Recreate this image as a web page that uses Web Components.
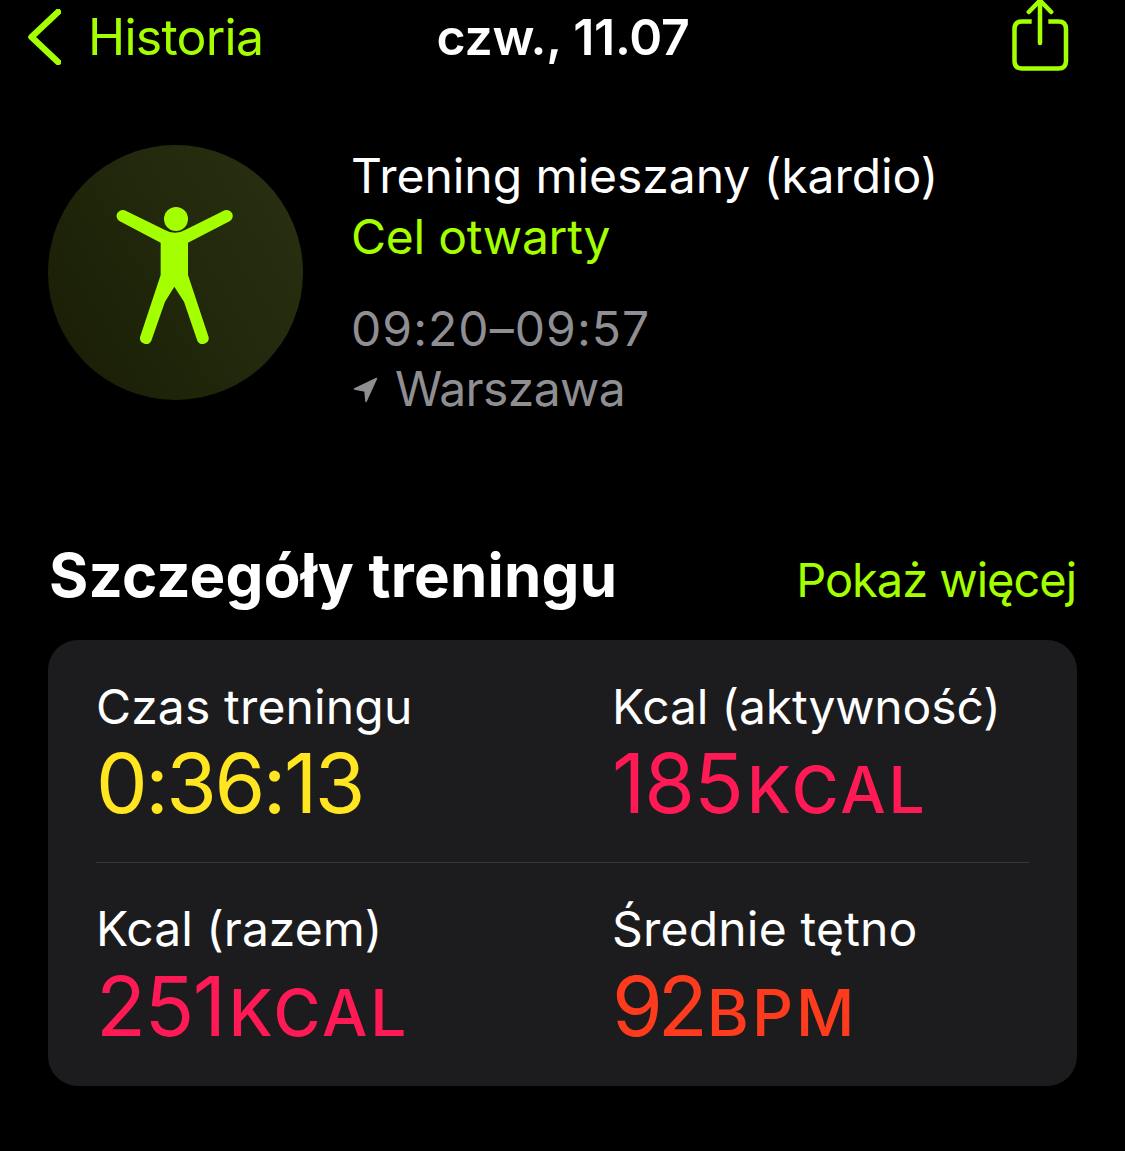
<!DOCTYPE html>
<html lang="pl">
<head>
<meta charset="utf-8">
<title>Trening</title>
<style>
    html, body { margin: 0; background: #000; }
    body { font-family: Inter, "Noto Sans", sans-serif; color: #fff; width: 1125px; height: 1151px; overflow: hidden; }
</style>
</head>
<body>
<workout-nav title-text="czw., 11.07" back="Historia"></workout-nav>
<workout-summary></workout-summary>
<section-head heading="Szczegóły treningu" action="Pokaż więcej"></section-head>
<stats-card>
    <stat-cell label="Czas treningu" label-tracking="0.15" value="0:36:13" color="#ffe620"></stat-cell>
    <stat-cell label="Kcal (aktywność)" label-tracking="-0.15" value="185" unit="KCAL" color="#ff1a55" tracking="-1"></stat-cell>
    <stat-cell label="Kcal (razem)" label-tracking="0" value="251" unit="KCAL" color="#ff1a55" tracking="-1.5"></stat-cell>
    <stat-cell label="Średnie tętno" label-tracking="0.2" value="92" unit="BPM" color="#ff3b1e" tracking="-5"></stat-cell>
</stats-card>

<script>
class WorkoutNav extends HTMLElement {
    constructor() {
        super();
        this.attachShadow({ mode: 'open' });
    }
    connectedCallback() {
        this.shadowRoot.innerHTML = `
            <style>
            :host { display: grid; grid-template-columns: 1fr auto 1fr; align-items: center; height: 72px; padding: 0 27px 0 28px; }
            .back { display: flex; align-items: center; gap: 27px; color: #a4ff00; font-size: 50px; letter-spacing: -0.75px; }
            .back span, .title { margin-top: 2px; }
            .back svg { margin-top: 2px; }
            .title { font-size: 50px; font-weight: 600; letter-spacing: -0.25px; }
            svg { display: block; }
            .share { justify-self: end; margin-right: 29px; }
            </style>
            <div class="back">
                <svg width="33" height="56" viewBox="0 0 33 56"><path d="M30 3 L3.500 28 L30 53" fill="none" stroke="#a4ff00" stroke-width="6.500" stroke-linecap="round" stroke-linejoin="round"/></svg>
                <span>${this.getAttribute('back')}</span>
            </div>
            <div class="title">${this.getAttribute('title-text')}</div>
            <svg class="share" width="58" height="72" viewBox="0 0 58 72"><g fill="none" stroke="#a4ff00" stroke-width="4.5" stroke-linecap="round" stroke-linejoin="round"><path d="M20.700 21.500 H11 Q3.500 21.500 3.500 29 V61 Q3.500 68.500 11 68.500 H47.500 Q55 68.500 55 61 V29 Q55 21.500 47.500 21.500 H37.300" stroke-linecap="butt"/><path d="M29 43 V1"/><path d="M17.800 12 L29 0.500 L40.200 12"/></g></svg>
        `;
    }
}

class WorkoutSummary extends HTMLElement {
    constructor() {
        super();
        this.attachShadow({ mode: 'open' });
    }
    connectedCallback() {
        this.shadowRoot.innerHTML = `
            <style>
            :host { display: flex; gap: 48px; padding: 73px 0 0 48px; height: 403px; box-sizing: border-box; }
            svg { display: block; flex: none; }
            .info { font-size: 48px; line-height: 61px; letter-spacing: -0.04px; }
            .goal { color: #a4ff00; letter-spacing: -0.25px; }
            .muted { color: #8e8e93; }
            .time { margin-top: 31px; letter-spacing: 1.05px; }
            .place { display: flex; align-items: center; gap: 19px; letter-spacing: -0.6px; margin-top: -1px; }
            .place svg { margin: 2px -2px 0 2px; }
            </style>
            <svg width="255" height="255" viewBox="24 30 765 765">
                <defs><linearGradient id="disc" x1="0" y1="0.8" x2="1" y2="0.2"><stop offset="0" stop-color="#1a1f05"/><stop offset="1" stop-color="#283011"/></linearGradient></defs>
                <circle cx="406.500" cy="412.500" r="382.500" fill="url(#disc)"/>
                <circle cx="408" cy="252" r="36" fill="#a4ff00"/>
                <path fill="#a4ff00" d="M254 226 L375 285 Q405 302 435 285 L554 226 A18 18 0 0 1 570 258 L444 323 V420 L506 607 A18 18 0 0 1 472 617 L432 500 L403 455 L375 500 L334 617 A18 18 0 0 1 300 607 L362 420 V323 L238 258 A18 18 0 0 1 254 226 Z"/>
            </svg>
            <div class="info">
                <div>Trening mieszany (kardio)</div>
                <div class="goal">Cel otwarty</div>
                <div class="muted time">09:20–09:57</div>
                <div class="muted place">
                    <svg width="25" height="26" viewBox="0 0 25 26"><path fill="#8e8e93" stroke="#8e8e93" stroke-width="1.500" stroke-linejoin="round" d="M1.500 12 L23.500 1.500 L13 24.500 L12 14 Z"/></svg>
                    <span>Warszawa</span>
                </div>
            </div>
        `;
    }
}

class SectionHead extends HTMLElement {
    constructor() {
        super();
        this.attachShadow({ mode: 'open' });
    }
    connectedCallback() {
        this.shadowRoot.innerHTML = `
            <style>
            :host { display: flex; justify-content: space-between; align-items: baseline; padding: 64px 49px 0 49px; height: 165px; box-sizing: border-box; }
            h2 { margin: 0; font-size: 60px; font-weight: 700; letter-spacing: 0.22px; line-height: 72px; }
            a { color: #a4ff00; font-size: 47px; letter-spacing: -1.03px; }
            </style>
            <h2>${this.getAttribute('heading')}</h2>
            <a>${this.getAttribute('action')}</a>
        `;
    }
}

class StatsCard extends HTMLElement {
    constructor() {
        super();
        this.attachShadow({ mode: 'open' });
        this.shadowRoot.innerHTML = `
            <style>
            :host { display: block; margin: 0 48px; background: #1c1c1e; border-radius: 30px; height: 446px; box-sizing: border-box; padding: 0 48px; }
            .grid { display: grid; grid-template-columns: 516px 1fr; grid-auto-rows: 223px; }
            ::slotted(stat-cell:nth-child(-n+2)) { border-bottom: 1px solid #38383a; }
            ::slotted(stat-cell:nth-child(n+3)) { --lift: -1px; }
            </style>
            <div class="grid"><slot></slot></div>
        `;
    }
}

class StatCell extends HTMLElement {
    constructor() {
        super();
        this.attachShadow({ mode: 'open' });
    }
    connectedCallback() {
        const unit = this.getAttribute('unit');
        const tracking = this.getAttribute('tracking') || '-2.5';
        this.shadowRoot.innerHTML = `
            <style>
            :host { display: block; padding-top: 38px; box-sizing: border-box; }
            .label { font-size: 48px; line-height: 58px; letter-spacing: ${this.getAttribute('label-tracking')}px; color: #fff; margin-top: var(--lift, 0); margin-bottom: calc(-1 * var(--lift, 0px)); }
            .value { font-size: 82px; line-height: 96px; letter-spacing: ${tracking}px; color: ${this.getAttribute('color')}; display: flex; align-items: baseline; }
            .unit { font-size: 64px; font-weight: 500; letter-spacing: 3px; margin-left: 4px; }
            </style>
            <div class="label">${this.getAttribute('label')}</div>
            <div class="value"><span>${this.getAttribute('value')}</span>${unit ? `<span class="unit">${unit}</span>` : ''}</div>
        `;
    }
}

customElements.define('workout-nav', WorkoutNav);
customElements.define('workout-summary', WorkoutSummary);
customElements.define('section-head', SectionHead);
customElements.define('stats-card', StatsCard);
customElements.define('stat-cell', StatCell);
</script>
</body>
</html>
